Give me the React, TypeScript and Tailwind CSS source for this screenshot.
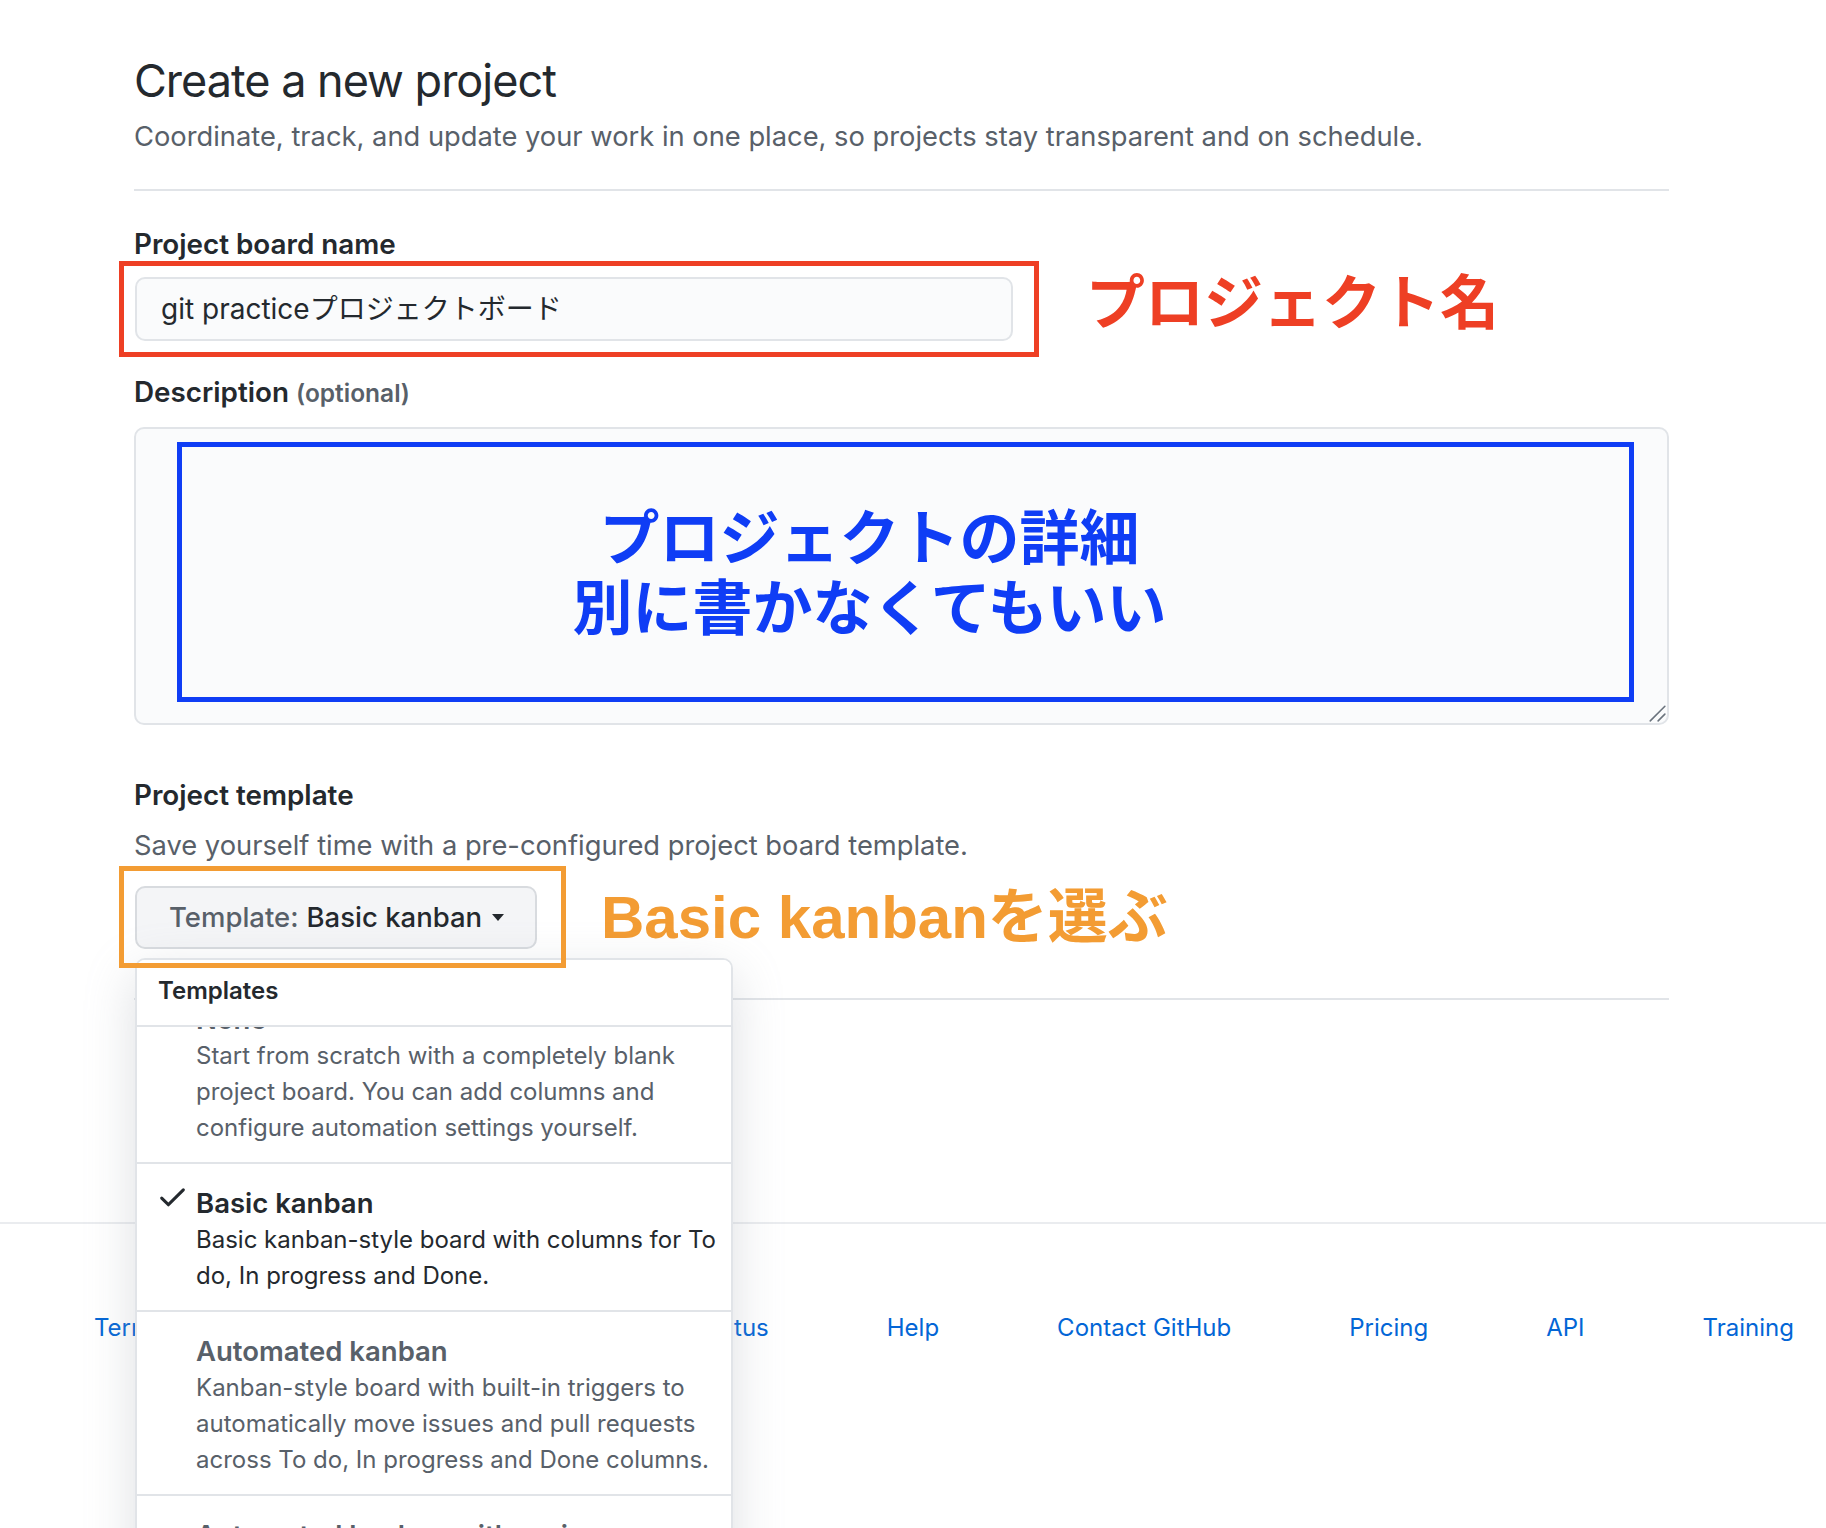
import React from 'react';

const CheckIcon = () => (
  <svg viewBox="0 0 16 16" className="-mt-[4px] h-[33px] w-[33px] fill-[#24292e]">
    <path d="M13.78 4.22a.75.75 0 010 1.06l-7.25 7.25a.75.75 0 01-1.06 0L2.22 9.28a.75.75 0 011.06-1.06L6 10.94l6.72-6.72a.75.75 0 011.06 0z" />
  </svg>
);

interface TemplateItem {
  title: string;
  lines: string[];
  selected?: boolean;
}

const templates: TemplateItem[] = [
  {
    title: 'None',
    lines: [
      'Start from scratch with a completely blank',
      'project board. You can add columns and',
      'configure automation settings yourself.',
    ],
  },
  {
    title: 'Basic kanban',
    lines: ['Basic kanban-style board with columns for To', 'do, In progress and Done.'],
    selected: true,
  },
  {
    title: 'Automated kanban',
    lines: [
      'Kanban-style board with built-in triggers to',
      'automatically move issues and pull requests',
      'across To do, In progress and Done columns.',
    ],
  },
  {
    title: 'Automated kanban with reviews',
    lines: [
      'Everything included in the automated kanban',
      'template with additional triggers for pull',
      'request reviews.',
    ],
  },
];

const footerLinks = ['Terms', 'Privacy', 'Security', 'Status', 'Help', 'Contact GitHub', 'Pricing', 'API', 'Training', 'Blog', 'About'];

export default function App() {
  return (
    <div className="h-[1528px] w-full overflow-hidden bg-white font-[Inter,'Noto_Sans_CJK_JP',sans-serif] text-[#24292e]">
      <main className="ml-[134px] w-[1535px] pt-[53px]">
        {/* Header */}
        <h1 className="text-[45px] font-normal leading-[56px] tracking-[-1px]">Create a new project</h1>
        <p className="mt-[8px] text-[27.3px] leading-[39px] text-[#586069]">
          Coordinate, track, and update your work in one place, so projects stay transparent and on schedule.
        </p>
        <div className="mt-[33px] h-[2px] bg-[#e1e4e8]" />

        {/* Project board name */}
        <label className="mt-[34px] block text-[27.8px] font-semibold leading-[39px]">Project board name</label>
        <div className="mt-[13px] flex items-start">
          <div className="relative">
            <div className="ml-[1px] flex h-[64px] w-[878px] items-center rounded-[10px] border-2 border-[#e1e4e8] bg-[#fafbfc] px-[24px] text-[28px]">
              git practiceプロジェクトボード
            </div>
            <div className="pointer-events-none absolute -top-[16px] -right-[26px] -bottom-[16px] -left-[15px] border-[5px] border-[#ee3f24]" />
          </div>
          <span className="-mt-[13px] ml-[73px] font-['Noto_Sans_CJK_JP',sans-serif] text-[59px] leading-[70px] font-bold text-[#ee3f24]">
            プロジェクト名
          </span>
        </div>

        {/* Description */}
        <label className="mt-[32px] block text-[27.8px] font-semibold leading-[39px]">
          Description <span className="text-[24.5px] text-[#586069]">(optional)</span>
        </label>
        <div className="relative mt-[14px] h-[298px] rounded-[10px] border-2 border-[#e1e4e8] bg-[#fafbfc] pt-[13px] pr-[33px] pb-[21px] pl-[41px]">
          <div className="flex h-full flex-col items-center justify-center border-[5px] border-[#0f3df5] pr-[72px] pb-[7px] font-['Noto_Sans_CJK_JP',sans-serif] text-[60px] leading-[70px] font-bold text-[#0f3df5]">
            <span>プロジェクトの詳細</span>
            <span>別に書かなくてもいい</span>
          </div>
          <svg viewBox="0 0 16 16" className="absolute right-[1px] bottom-[1px] h-[18px] w-[18px] stroke-[#6a737d]" strokeWidth="1.4" strokeLinecap="round">
            <line x1="2" y1="15" x2="15" y2="2" />
            <line x1="9" y1="15" x2="15" y2="9" />
          </svg>
        </div>

        {/* Project template */}
        <h3 className="mt-[51px] text-[27.8px] font-semibold leading-[39px]">Project template</h3>
        <p className="mt-[11px] text-[27.3px] leading-[39px] text-[#586069]">
          Save yourself time with a pre-configured project board template.
        </p>
        <div className="mt-[21px] flex items-center">
          <div className="relative">
            <button className="ml-[1px] flex h-[63px] w-[402px] items-center rounded-[10px] border-2 border-[#d8dbdf] bg-[#f4f5f7] pl-[32px] text-[27.5px] font-medium">
              <span className="text-[#586069]">Template:</span>
              <span className="ml-[8px] text-[#24292e]">Basic kanban</span>
              <svg viewBox="0 0 12 7" className="ml-[9px] h-[7px] w-[14px] fill-[#24292e]">
                <path d="M0 0h12L6 7z" />
              </svg>
            </button>
            <div className="pointer-events-none absolute -top-[20px] -right-[29px] -bottom-[19px] -left-[15px] z-20 border-[5px] border-[#f39c33]" />

            {/* Template menu */}
            <div className="absolute top-[72px] left-[1px] z-10 h-[720px] w-[598px] overflow-hidden rounded-t-[10px] border-2 border-[#e1e4e8] bg-white shadow-[0_16px_50px_rgba(149,157,165,0.32)]">
              <div className="relative z-10 border-b-2 border-[#e1e4e8] bg-white pt-[13px] pb-[16px] pl-[21px] text-[24px] font-semibold leading-[36px]">
                Templates
              </div>
              <div className="-mt-[47px]">
                {templates.map((t, i) => (
                  <div key={t.title} className={`flex pt-[20px] pb-[16px] pl-[19px] ${i > 0 ? 'border-t-2 border-[#e1e4e8]' : ''}`}>
                    <div className="w-[40px] shrink-0">{t.selected && <CheckIcon />}</div>
                    <div className="whitespace-nowrap">
                      <div className={`text-[27.5px] font-semibold leading-[38px] ${t.selected ? 'text-[#24292e]' : 'text-[#586069]'}`}>{t.title}</div>
                      {t.lines.map((l) => (
                        <div key={l} className={`text-[24px] leading-[36px] ${t.selected ? 'text-[#24292e]' : 'text-[#586069]'}`}>
                          {l}
                        </div>
                      ))}
                    </div>
                  </div>
                ))}
              </div>
            </div>
          </div>
          <span className="ml-[64px] font-['Liberation_Sans','Noto_Sans_CJK_JP',sans-serif] text-[60px] leading-[63px] font-bold text-[#f39c33]">
            Basic kanbanを選ぶ
          </span>
        </div>
        <div className="mt-[49px] h-[2px] bg-[#e1e4e8]" />
      </main>

      {/* Footer */}
      <footer className="mt-[222px] border-t-2 border-[#eaecef] pt-[87px]">
        <ul className="flex gap-[118px] pl-[94px] text-[24px] leading-[34px] whitespace-nowrap text-[#0366d6]">
          {footerLinks.map((l) => (
            <li key={l}>
              <a href="#">{l}</a>
            </li>
          ))}
        </ul>
      </footer>
    </div>
  );
}
